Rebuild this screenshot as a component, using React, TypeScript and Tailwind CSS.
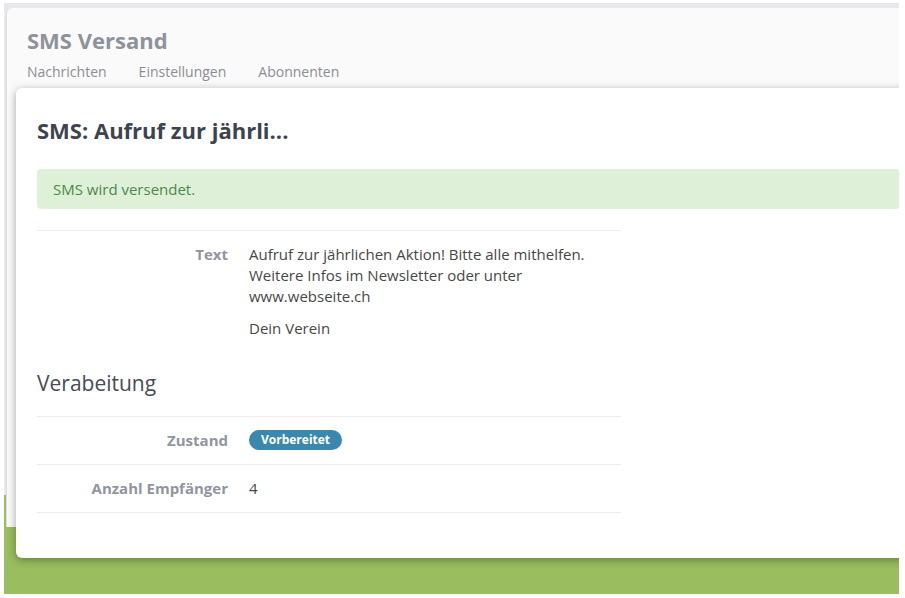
const font = { fontFamily: '"Open Sans", "Noto Sans", sans-serif' };

const Row = ({ label, children }: { label: string; children: React.ReactNode }) => (
  <div className="grid grid-cols-[191px_1fr] gap-x-[21px] border-t border-[#ececec] py-[13px] text-[15px] leading-[21px]">
    <dt className="text-right font-bold text-[#9095a0]">{label}</dt>
    <dd className="text-[#474747]">{children}</dd>
  </div>
);

export default function App() {
  return (
    <div className="w-[905px] h-[598px] bg-white pt-[3px] pl-[4px] pr-[6px] pb-[4px]" style={font}>
      <div className="h-full overflow-hidden bg-[linear-gradient(to_bottom,#e7e8ec_492px,#99bd5f_492px)] pt-[5px] pl-[2px]">
        <section className="h-[519px] rounded-tl-[6px] bg-[#fafafa] border-l border-[#dcdcdc]">
          <header className="h-[80px] pl-[20px] pt-[17px]">
            <h1 className="text-[22px] leading-[30px] font-bold text-[#8e929a]">SMS Versand</h1>
            <nav className="mt-[7px] flex gap-8 text-[14px] leading-[20px] text-[#8a8d94]">
              <span>Nachrichten</span>
              <span>Einstellungen</span>
              <span>Abonnenten</span>
            </nav>
          </header>

          <div className="ml-[9px] w-[905px] h-[470px] rounded-[6px] bg-white shadow-[0_2px_8px_rgba(0,0,0,0.35)] pl-[21px] pr-[21px] pt-[27px]">
            <h2 className="text-[22px] leading-[30px] font-bold text-[#3e4350]">SMS: Aufruf zur jährli...</h2>

            <div className="mt-[24px] h-[40px] flex items-center rounded-[4px] bg-[#dff0d8] px-4 text-[15px] text-[#4c8849]">
              SMS wird versendet.
            </div>

            <dl className="mt-[21px] w-[584px]">
              <Row label="Text">
                <p className="mb-[11px]">
                  Aufruf zur jährlichen Aktion! Bitte alle mithelfen.
                  <br />
                  Weitere Infos im Newsletter oder unter
                  <br />
                  www.webseite.ch
                </p>
                <p>Dein Verein</p>
              </Row>
            </dl>

            <h3 className="mt-[17px] mb-[19px] text-[21px] leading-[28px] text-[#474b55]">Verabeitung</h3>

            <dl className="w-[584px] border-b border-[#ececec]">
              <Row label="Zustand">
                <span className="inline-block h-[20px] align-top rounded-full bg-[#3b88ae] px-[12px] text-[12px] leading-[20px] font-bold text-white">
                  Vorbereitet
                </span>
              </Row>
              <Row label="Anzahl Empfänger">4</Row>
            </dl>
          </div>
        </section>
      </div>
    </div>
  );
}
